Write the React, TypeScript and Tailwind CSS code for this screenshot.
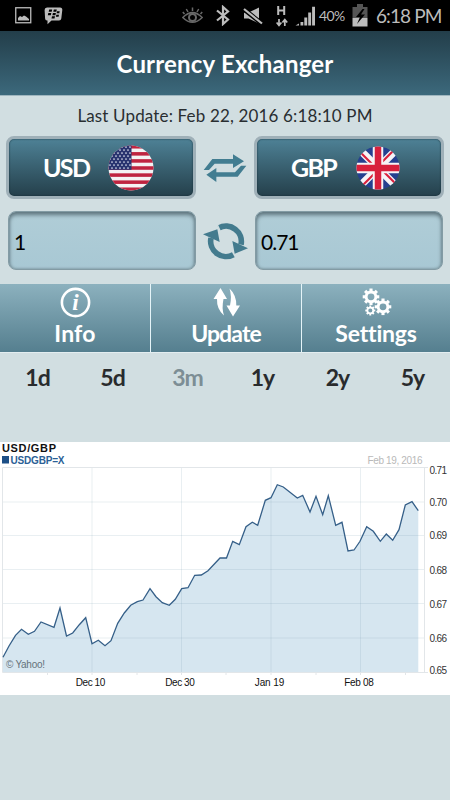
import React from 'react';
import clsx from 'clsx';

const CHART_POINTS: [number, number][] = [
  [3, 215.3], [9, 204], [15.5, 193.3], [21.5, 187.3], [28.3, 192.3], [34.5, 189.3], [41, 180], [54, 185.3],
  [60, 166], [66.5, 194], [72.7, 191], [79.3, 182.7], [85.7, 175.7], [92, 201.7], [98.3, 198.3], [105, 203.7],
  [111, 198.7], [117.7, 181.3], [124.3, 171], [130.7, 163.3], [137.3, 159.7], [143, 158], [150, 146.7],
  [156, 154.7], [162.3, 160.7], [169.3, 163.3], [175.3, 157.3], [181.7, 146.7], [188, 145.7], [194.7, 133.3],
  [201.3, 133], [208, 128.7], [220, 116], [226.5, 116], [232.7, 99.3], [239.3, 102.7], [246, 84.7],
  [252.3, 80.3], [257.7, 83.3], [265.3, 58.3], [271, 55.7], [277.3, 42.7], [283.3, 45], [297.3, 56],
  [302.7, 53.3], [310, 70], [316, 54.3], [322.7, 72.7], [328.3, 53.7], [335.7, 83.3], [342, 80.3], [348, 109],
  [354, 108], [360, 99.3], [366.7, 84.7], [373.3, 89.3], [380.3, 99.3], [386.3, 92], [392.7, 98.3],
  [399, 87.7], [405.3, 63], [412, 59.7], [418.3, 68.7],
];

const Y_LABELS = [
  { label: '0.71', y: 32 },
  { label: '0.70', y: 63.5 },
  { label: '0.69', y: 97 },
  { label: '0.68', y: 131.5 },
  { label: '0.67', y: 165.5 },
  { label: '0.66', y: 200 },
  { label: '0.65', y: 231.5 },
];

const X_LABELS = [
  { label: 'Dec 10', x: 92 },
  { label: 'Dec 30', x: 181.5 },
  { label: 'Jan 19', x: 271 },
  { label: 'Feb 08', x: 360.5 },
];

const RANGES = ['1d', '5d', '3m', '1y', '2y', '5y'];

const StatusBar = () => (
  <div className="flex h-[31px] items-center bg-black pl-[15px] text-[#bcbcbc]">
    {/* Screenshot saved */}
    <svg width="17" height="17" viewBox="0 0 17 17">
      <rect x="0.75" y="0.75" width="15" height="15" fill="none" stroke="currentColor" strokeWidth="1.3" />
      <path d="M3 13.5V11l2-2 2 1 2-1.5 2 1 3 2.5V13.5Z" fill="currentColor" />
    </svg>
    {/* BBM */}
    <svg className="ml-[12px]" width="19" height="18" viewBox="0 0 19 18">
      <path d="M3 .5h13q2.5 0 2.3 2.5l-1 8.5q-.3 2-2.3 2H7.5L3.5 17.3V13.5H3q-1.8 0-1.9-2L.6 3Q.6.5 3 .5Z" fill="currentColor" />
      <path
        d="M5.2 2.5h3l-.5 2.2h-3ZM9.8 2.5h3l-.5 2.2h-3ZM4.3 6h3l-.5 2.2h-3ZM8.9 6h3l-.5 2.2h-3ZM13 4.2h2.7l-.4 2.1h-2.7ZM12.3 7.7H15l-.4 2.1h-2.7ZM8 9.3h3l-.5 2.2h-3Z"
        fill="#000"
      />
    </svg>
    {/* Smart stay */}
    <svg className="ml-[119px] text-[#686868]" width="21" height="18" viewBox="0 0 21 18" fill="none" stroke="currentColor">
      <path d="M.8 10.5Q10.5.8 20.2 10.5Q10.5 20.2.8 10.5Z" strokeWidth="1.5" />
      <circle cx="10.5" cy="10.5" r="3.5" strokeWidth="2" />
      <path d="M10.5 4V.5M6 5 4.3 2M15 5l1.7-3M2.5 7 .8 5M18.5 7l1.7-2" strokeWidth="1.5" />
    </svg>
    <svg className="ml-[12px]" width="16" height="21" viewBox="0 0 16 21" fill="none" stroke="currentColor" strokeWidth="2.2">
      <path d="M2 5.5 13 14.5 8 19V2L13 6.5 2 15.5" />
    </svg>
    {/* Muted */}
    <svg className="ml-[12px]" width="20" height="20" viewBox="0 0 20 20">
      <path d="M1 6.5h4.5L16 1.5V17.5L5.5 12.5H1Z" fill="currentColor" />
      <path d="M0 2.5 18 17" stroke="#000" strokeWidth="4.5" />
      <path d="M1 3 19 17.5" stroke="currentColor" strokeWidth="2.2" />
    </svg>
    <svg className="ml-[13px]" width="12" height="22" viewBox="0 0 12 22" fill="none" stroke="currentColor">
      <path d="M2.2 1v9M8.2 1v9M2.2 5.5h6" strokeWidth="2" />
      <path d="M3 14v6M.6 17.5 3 20.5l2.4-3M8.8 21v-6M6.4 17.5l2.4-3 2.4 3" strokeWidth="1.7" />
    </svg>
    <svg className="ml-[7px]" width="21" height="20" viewBox="0 0 21 20" fill="currentColor">
      <path d="M.5 19.5 4 17.500v2ZM5.500 16h2.800v3.500H5.500ZM9.300 11.500h2.900v8H9.300ZM13.200 6.500h2.900v13h-2.900ZM17.100.8H20v18.700h-2.900Z" />
    </svg>
    <span className="ml-[3px] w-[27px] whitespace-nowrap text-[14px] leading-none tracking-[-0.6px]">40%</span>
    <svg className="ml-[6px]" width="16" height="23" viewBox="0 0 16 23">
      <path d="M5 0h6v3h4.5v11H.5V3H5Z" fill="#555" />
      <path d="M.5 14h15v8.5H.5Z" fill="currentColor" />
      <path d="M10.5 5 4 13h4l-3 7 8-9.5H9L12.500 5Z" fill="#000" />
    </svg>
    <span className="ml-[8px] whitespace-nowrap text-[19px] leading-none tracking-[-0.9px]">6:18 PM</span>
  </div>
);

const UsFlag = () => (
  <svg width="46" height="46" viewBox="0 0 46 46">
    <clipPath id="us-round">
      <circle cx="23" cy="23" r="22.5" />
    </clipPath>
    <g clipPath="url(#us-round)">
      <rect width="46" height="46" fill="#f4f2f3" />
      {[0, 2, 4, 6, 8, 10, 12].map((i) => (
        <rect key={i} y={i * 3.54} width="46" height="3.54" fill="#bf2440" />
      ))}
      <rect width="23.5" height="24.8" fill="#29346f" />
      {[2, 5, 8, 11, 14, 17, 20, 23].map((y, row) =>
        [2, 6, 10, 14, 18, 22].map((x) => (
          <circle key={`${x}-${y}`} cx={x - (row % 2) * 2} cy={y} r="0.85" fill="#dfe4f0" />
        ))
      )}
    </g>
  </svg>
);

const UkFlag = () => (
  <svg width="44" height="46" viewBox="0 0 46 46">
    <clipPath id="uk-round">
      <circle cx="23" cy="23" r="22.5" />
    </clipPath>
    <g clipPath="url(#uk-round)">
      <rect width="46" height="46" fill="#25408f" />
      <path d="M3 3 43 43M43 3 3 43" stroke="#f6f4f6" strokeWidth="8" />
      <path d="M4 6 22 24M42 40 24 22M40 4 22 22M6 42 24 24" stroke="#d8203c" strokeWidth="2.2" />
      <path d="M23 0V46M0 23H46" stroke="#f6f4f6" strokeWidth="11" />
      <path d="M23 0V46M0 23H46" stroke="#d8203c" strokeWidth="6.8" />
    </g>
  </svg>
);

interface CurrencyButtonProps {
  code: string;
  children: React.ReactNode;
}

const CurrencyButton = ({ code, children }: CurrencyButtonProps) => (
  <button className="flex h-[63px] w-[190px] items-center rounded-lg border-[3px] border-[#9fb0b8] bg-linear-to-b from-[#50859a] to-[#233d48] bg-origin-border pl-[34px] text-[25px] font-bold text-white shadow-[inset_0_0_2px_#152b35]">
    <span className="w-[65px] whitespace-nowrap text-left tracking-[-1.7px]">{code}</span>
    {children}
  </button>
);

const AmountField = ({ value }: { value: string }) => (
  <div className="flex h-[59px] w-[188px] items-center rounded-lg border border-[#839ba4] bg-linear-to-b from-[#b0cdd7] to-[#a8c8d4] pl-[5px] pt-[3px] text-[21px] tracking-[-1px] text-black shadow-[inset_0_3px_4px_#60767f,inset_0_0_3px_#708790]">
    {value}
  </div>
);

const SwapIcon = () => (
  <svg width="44" height="29" viewBox="22 24 132 87" fill="#427d91" className="relative top-px">
    <path d="M24 72 50 39H112V25L145 46 112 66V53H57L40 72Z" />
    <path d="M152 59 126 92H62V108L32 86 62 66V79H118L136 59Z" />
  </svg>
);

const RefreshIcon = () => (
  <svg width="46" height="38" viewBox="19 233 138 114" className="relative top-px">
    <g fill="none" stroke="#437b8e" strokeWidth="17">
      <path d="M66 248A46 46 0 0 1 133 298" />
      <path d="M110 328A46 46 0 0 1 43 278" />
    </g>
    <path d="M107 287 154 309 114 325ZM69 290 19 267 62 252Z" fill="#437b8e" />
    {/* Gap between the left arrow head and the upper arc */}
    <path d="M62 238 73 262" stroke="#d1dee1" strokeWidth="4" />
  </svg>
);

const InfoIcon = () => (
  <svg width="31" height="31" viewBox="0 0 31 31">
    <circle cx="15.5" cy="15.5" r="13.6" fill="none" stroke="#fff" strokeWidth="2.6" />
    <text x="15.5" y="23" textAnchor="middle" fill="#fff" className="font-['Liberation_Serif',serif] text-[23px] font-bold italic">
      i
    </text>
  </svg>
);

const UpdateIcon = () => (
  <svg width="31" height="31" viewBox="0 0 31 31" fill="#fff">
    <path d="M9.500 1 16 12H12.500Q10.500 21 13 28.500Q5.500 22 6 12H2.500Z" />
    <path d="M22 29.500 15.500 18.500H19Q21 9 18.500 1.500Q25.500 8 25.300 18.500H29Z" />
  </svg>
);

const Gear = ({ cx, cy, r }: { cx: number; cy: number; r: number }) => (
  <g transform={`translate(${cx} ${cy}) scale(${r / 8})`}>
    <circle r="5" fill="none" stroke="#fff" strokeWidth="3" />
    {[0, 45, 90, 135, 180, 225, 270, 315].map((angle) => (
      <rect key={angle} x="-1.6" y="-8.5" width="3.2" height="3.5" fill="#fff" transform={`rotate(${angle})`} />
    ))}
  </g>
);

const SettingsIcon = () => (
  <svg width="31" height="31" viewBox="0 0 31 31">
    <Gear cx={10} cy={9.8} r={7.8} />
    <Gear cx={22} cy={19.8} r={7.8} />
    <Gear cx={9.3} cy={23.5} r={4.7} />
  </svg>
);

const TABS = [
  { label: 'Info', icon: <InfoIcon />, text: 'tracking-[0.2px]' },
  { label: 'Update', icon: <UpdateIcon />, text: 'tracking-[-0.9px]' },
  { label: 'Settings', icon: <SettingsIcon />, text: 'tracking-[-0.2px]' },
];

const RateChart = () => {
  const line = CHART_POINTS.map(([x, y]) => `${x},${y}`).join(' ');

  return (
    <svg width="450" height="253" viewBox="0 0 450 253" className="block bg-white font-['Liberation_Sans',Arial,sans-serif]">
      <text x="2" y="9.5" textLength="54" className="text-[11px] font-bold" fill="#111">USD/GBP</text>
      <rect x="2" y="14" width="7" height="7.5" fill="#1c4f86" />
      <text x="10.5" y="21.5" textLength="54" className="text-[10px] font-bold" fill="#2b5f96">USDGBP=X</text>
      <text x="367.5" y="21.5" textLength="55" className="text-[10px]" fill="#b9b9b9">Feb 19, 2016</text>

      <polygon points={`3,230.5 ${line} 418.3,230.5`} fill="#d6e6f0" />
      <g stroke="#6a91a8" strokeOpacity="0.15">
        {[60, 93.5, 127.5, 161.5, 196].map((y) => (
          <path key={y} d={`M3 ${y}H425`} />
        ))}
        {X_LABELS.map(({ x }) => (
          <path key={x} d={`M${x} 26V230`} />
        ))}
      </g>
      <path d="M2.5 25.5H428M424.5 25.5V230.5M2.5 25.5V230.5H428" fill="none" stroke="#e2e6e9" />
      <path d="M47.5 230v3M92 230v3M137 230v3M181.5 230v3M226 230v3M271 230v3M316 230v3M360.5 230v3M405.5 230v3" stroke="#e2e6e9" />
      <polyline points={line} fill="none" stroke="#355f88" strokeWidth="1.3" />

      <text x="6" y="226" textLength="39" className="text-[10px]" fill="#65727a">© Yahoo!</text>
      {Y_LABELS.map(({ label, y }) => (
        <text key={label} x="429.5" y={y} textLength="17.5" className="text-[10px]" fill="#333">{label}</text>
      ))}
      {X_LABELS.map(({ label, x }) => (
        <text key={label} x={x - 1.5} y="243.5" textAnchor="middle" textLength="29.5" className="text-[10px]" fill="#111">{label}</text>
      ))}
    </svg>
  );
};

export default function App() {
  return (
    <div className="h-[800px] w-[450px] overflow-hidden bg-[#d1dee1] font-['Lato','Open_Sans',sans-serif]">
      <StatusBar />

      <header className="flex h-[65px] items-center justify-center border-b border-[#9fb6bf] bg-linear-to-b from-[#233e4a] to-[#3c697c] pt-[2px]">
        <h1 className="whitespace-nowrap text-[24px] font-bold tracking-[0.2px] text-white">Currency Exchanger</h1>
      </header>

      <p className="flex h-[40px] items-center justify-center whitespace-nowrap text-[17px] tracking-[0.15px] text-[#292e31]">
        Last Update: Feb 22, 2016 6:18:10 PM
      </p>

      <section className="flex items-center justify-between pl-[6px] pr-[6px]">
        <CurrencyButton code="USD"><UsFlag /></CurrencyButton>
        <SwapIcon />
        <CurrencyButton code="GBP"><UkFlag /></CurrencyButton>
      </section>

      <section className="mt-3 flex items-center justify-between pl-[8px] pr-[7px]">
        <AmountField value="1" />
        <RefreshIcon />
        <AmountField value="0.71" />
      </section>

      <nav className="mt-[14px] grid h-[69px] grid-cols-[151px_151px_148px] divide-x divide-[#e5f4f8] border-b border-[#e3edf0] bg-linear-to-b from-[#8cb1be] to-[#557f8f]">
        {TABS.map((tab) => (
          <button key={tab.label} className="flex flex-col items-center pt-[3px] text-[23px] font-bold leading-[31px] text-white">
            {tab.icon}
            <span className={tab.text}>{tab.label}</span>
          </button>
        ))}
      </nav>

      <div className="grid h-[89px] grid-cols-6 pt-[8px] text-center text-[23px] font-bold leading-[32px] tracking-[-1px]">
        {RANGES.map((range) => (
          <span key={range} className={clsx(range === '3m' ? 'text-[#7d8e95]' : 'text-[#292b2d]')}>
            {range}
          </span>
        ))}
      </div>

      <RateChart />
    </div>
  );
}
